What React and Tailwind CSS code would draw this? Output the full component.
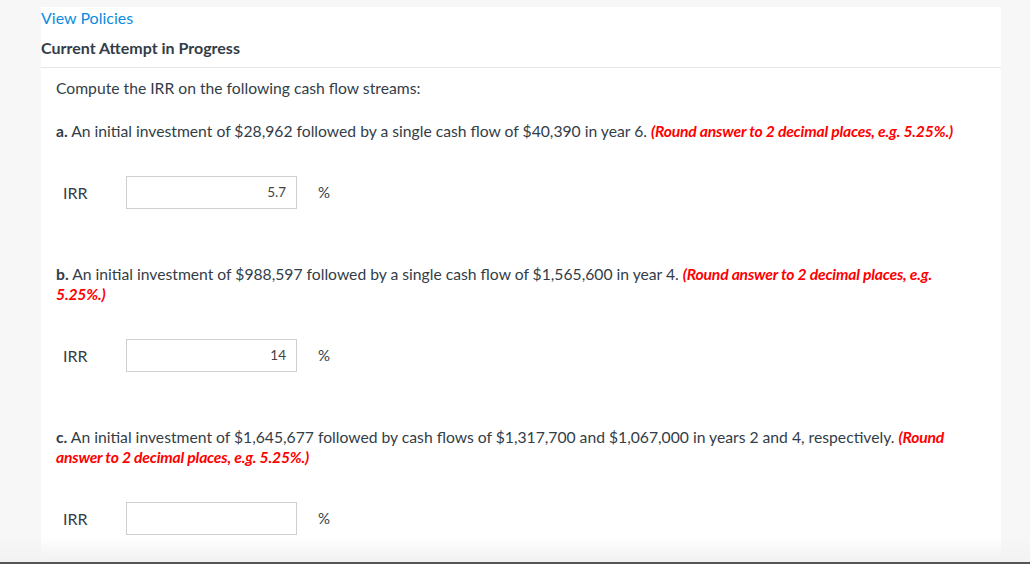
import React from 'react';

const questions = [
  {
    label: 'a.',
    text: 'An initial investment of $28,962 followed by a single cash flow of $40,390 in year 6.',
    value: '5.7',
  },
  {
    label: 'b.',
    text: 'An initial investment of $988,597 followed by a single cash flow of $1,565,600 in year 4.',
    value: '14',
  },
  {
    label: 'c.',
    text: 'An initial investment of $1,645,677 followed by cash flows of $1,317,700 and $1,067,000 in years 2 and 4, respectively.',
    value: '',
  },
];

function Question({ q }) {
  return (
    <div>
      <p className="text-[15.7px] leading-[20px] pr-[20px]">
        <span className="font-bold">{q.label}</span> {q.text}{' '}
        <span className="font-bold italic text-[#ff0000] tracking-[-0.2px]">
          (Round answer to 2 decimal places, e.g. 5.25%.)
        </span>
      </p>
      <div className="flex items-center mt-[35px] pl-[7px]">
        <span className="w-[63px] text-[16px]">IRR</span>
        <div className="w-[171px] h-[33px] border border-[#cfcfcf] flex items-center justify-end pr-[10px] text-[13.5px] text-[#444]">
          {q.value}
        </div>
        <span className="ml-[21px] text-[15px]">%</span>
      </div>
    </div>
  );
}

export default function App() {
  return (
    <div
      className="h-[564px] w-[1030px] bg-[#f7f7f7] flex flex-col overflow-hidden text-[#333d47]"
      style={{ fontFamily: 'Lato, "Open Sans", sans-serif' }}
    >
      <div className="flex-1 overflow-hidden relative">
        <div className="ml-[41px] mt-[7px] w-[960px] bg-white h-full">
          <div className="pt-[1px] text-[16px] leading-[20px] text-[#0b8ce0]">View Policies</div>
          <div className="mt-[10px] pb-[9px] border-b border-[#e6e6e6] text-[16px] font-bold leading-[20px]">
            Current Attempt in Progress
          </div>
          <div className="px-[15px] pt-[10px]">
            <p className="text-[15.7px] leading-[20px]">Compute the IRR on the following cash flow streams:</p>
            <div className="mt-[23px] flex flex-col gap-[55px]">
              {questions.map((q) => (
                <Question key={q.label} q={q} />
              ))}
            </div>
          </div>
        </div>
        <div className="absolute left-0 right-0 bottom-0 h-[26px] bg-gradient-to-b from-transparent to-[#f2f2f2]" />
      </div>
      <div className="h-[2px] bg-[#555]" />
    </div>
  );
}
